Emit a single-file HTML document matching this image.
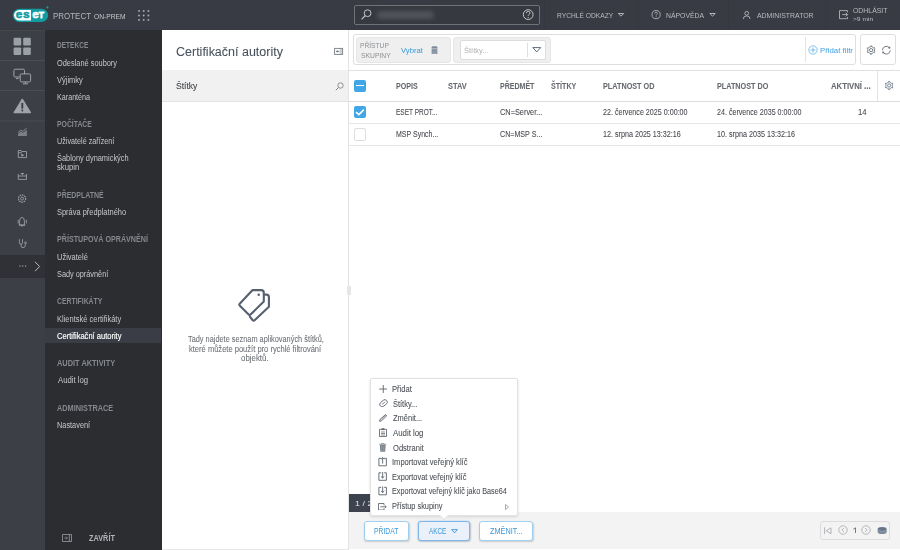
<!DOCTYPE html>
<html><head><meta charset="utf-8">
<style>
*{box-sizing:border-box;margin:0;padding:0}
html,body{width:900px;height:550px;overflow:hidden;background:#fff;font-family:"Liberation Sans",sans-serif;position:relative}
.b{position:absolute}
.t{position:absolute;white-space:nowrap;transform-origin:0 0;-webkit-text-stroke:0.07px currentColor}
</style></head><body>
<div class="b" style="left:0;top:0;width:900px;height:30px;background:#383b43"></div>
<div class="b" style="left:0;top:30px;width:45px;height:520px;background:#3c3f46"></div>
<div class="b" style="left:45px;top:30px;width:117px;height:520px;background:#2b2d31"></div>
<svg class="b" style="left:0;top:0" width="52" height="30" viewBox="0 0 52 30"><rect x="12.8" y="8.8" width="35.3" height="13.1" rx="6.5" fill="#129ca1"/><path d="M31 9.9 H19.4 A5.35 5.35 0 0 0 19.4 20.6 H31 Z" fill="#fff"/><g font-family="Liberation Sans" font-weight="bold" font-size="11.8" stroke-width="0.55"><text x="15.7" y="18.4" fill="#129ca1" stroke="#129ca1">e</text><text x="22.9" y="18.4" fill="#129ca1" stroke="#129ca1">s</text><text x="32.2" y="18.4" fill="#fff" stroke="#fff">e</text></g><path d="M38.6 11.6 H44.6 V13.5 H42.6 V18.4 H40.4 V13.5 H38.6 Z" fill="#fff"/><circle cx="47.4" cy="7.4" r="1.1" fill="#129ca1"/></svg>
<div class="t" style="left:53.16px;top:11.75px;font-size:9.0px;line-height:9.0px;color:#b4b7bc;transform:scaleX(0.884);-webkit-text-stroke:0">PROTECT</div>
<div class="t" style="left:93.90px;top:13.55px;font-size:6.4px;line-height:6.4px;color:#c6c8cc;transform:scaleX(1.047);-webkit-text-stroke:0">ON-PREM</div>
<svg class="b" style="left:0;top:0" width="160" height="30" viewBox="0 0 160 30"><g fill="#a9acb1"><circle cx="139" cy="11" r="0.95"/><circle cx="143.7" cy="11" r="0.95"/><circle cx="148.4" cy="11" r="0.95"/><circle cx="139" cy="15.45" r="0.95"/><circle cx="143.7" cy="15.45" r="0.95"/><circle cx="148.4" cy="15.45" r="0.95"/><circle cx="139" cy="19.9" r="0.95"/><circle cx="143.7" cy="19.9" r="0.95"/><circle cx="148.4" cy="19.9" r="0.95"/></g></svg>
<div class="b" style="left:354px;top:5px;width:186px;height:20px;border:1px solid #6f7278;border-radius:2px;background:#36393f"></div>
<svg class="b" style="left:0;top:0" width="900" height="30" viewBox="0 0 900 30"><g fill="none" stroke="#c4c6ca" stroke-width="1"><circle cx="367.6" cy="13.2" r="3.4"/><path d="M365.2 15.7 L361.6 19.3" stroke-width="1.2"/><circle cx="528.2" cy="14.6" r="4.9"/><path d="M526.4 13.2 Q526.4 11.3 528.2 11.3 Q530 11.3 530 13 Q530 14.1 528.8 14.6 Q528.2 14.9 528.2 15.9" stroke-width="0.95"/></g><circle cx="528.2" cy="17.6" r="0.6" fill="#c4c6ca"/><g fill="none" stroke="#b9bcc1" stroke-width="0.85"><circle cx="656.1" cy="14.6" r="4.1"/><path d="M654.8 13.6 Q654.8 12.2 656.1 12.2 Q657.4 12.2 657.4 13.4 Q657.4 14.2 656.6 14.6 Q656.1 14.9 656.1 15.6" stroke-width="0.8"/><circle cx="746.7" cy="13.3" r="1.9"/><path d="M743.3 19 Q743.3 15.9 746.7 15.9 Q750.1 15.9 750.1 19"/><path d="M847.5 12.3 V10.6 H839.5 V18.7 H847.5 V17"/><path d="M842.2 14.6 H847.6 M845.7 12.7 L847.6 14.6 L845.7 16.5"/></g><circle cx="656.1" cy="16.8" r="0.5" fill="#b9bcc1"/><path d="M618.3 13.5 H623.7 L621 16.2 Z M709.8 13.5 H715.2 L712.5 16.2 Z" fill="none" stroke="#b9bcc1" stroke-width="0.95" stroke-linejoin="round"/></svg>
<div class="b" style="left:377px;top:11px;width:57px;height:7.5px;border-radius:4px;background:#50535a;filter:blur(2px)"></div>
<div class="b" style="left:544px;top:0;width:1px;height:30px;background:#35383d"></div>
<div class="b" style="left:637.5px;top:0;width:1px;height:30px;background:#35383d"></div>
<div class="b" style="left:728px;top:0;width:1px;height:30px;background:#35383d"></div>
<div class="b" style="left:824.5px;top:0;width:1px;height:30px;background:#35383d"></div>
<div class="t" style="left:557.47px;top:11.90px;font-size:7.7px;line-height:7.7px;color:#b9bcc1;transform:scaleX(0.867);-webkit-text-stroke:0">RYCHLÉ ODKAZY</div>
<div class="t" style="left:665.85px;top:11.90px;font-size:7.7px;line-height:7.7px;color:#b9bcc1;transform:scaleX(0.892);-webkit-text-stroke:0">NÁPOVĚDA</div>
<div class="t" style="left:756.80px;top:11.85px;font-size:7.8px;line-height:7.8px;color:#b9bcc1;transform:scaleX(0.887);-webkit-text-stroke:0">ADMINISTRATOR</div>
<div class="t" style="left:852.89px;top:6.85px;font-size:7.8px;line-height:7.8px;color:#b9bcc1;transform:scaleX(0.883);-webkit-text-stroke:0">ODHLÁSIT</div>
<div class="t" style="left:852.87px;top:17.30px;font-size:5.9px;line-height:5.9px;color:#b9bcc1;transform:scaleX(1.126);-webkit-text-stroke:0">&gt;9 min</div>
<div class="b" style="left:0;top:29px;width:45px;height:1px;background:#34373c"></div>
<div class="b" style="left:0;top:30px;width:45px;height:1px;background:#45484e"></div>
<svg class="b" style="left:0;top:30px" width="45" height="230" viewBox="0 30 45 230">
<g fill="#9b9fa6"><rect x="13.6" y="37.8" width="7.6" height="7.6" rx="1.2"/><rect x="23.2" y="37.8" width="7.6" height="7.6" rx="1.2"/><rect x="13.6" y="47.4" width="7.6" height="7.6" rx="1.2"/><rect x="23.2" y="47.4" width="7.6" height="7.6" rx="1.2"/></g>
<rect x="0" y="60" width="45" height="1" fill="#4a4d54"/>
<g fill="none" stroke="#a0a3a9" stroke-width="1"><rect x="13.9" y="69.2" width="10.6" height="7.8" rx="1.2"/><path d="M16 78.6 H18.6"/><rect x="20.2" y="73.9" width="10.4" height="8" rx="1.2" fill="#3c3f46"/><path d="M25.4 82 V83.6 M22.8 83.8 H28"/></g>
<rect x="0" y="90" width="45" height="1" fill="#4a4d54"/>
<path d="M22.3 99.4 L30.4 112.6 H14.2 Z" fill="#a0a3a9" stroke="#a0a3a9" stroke-width="1.4" stroke-linejoin="round"/>
<path d="M22.3 103.6 V107.9" stroke="#3c3f46" stroke-width="1.9" stroke-linecap="round"/><circle cx="22.3" cy="110.4" r="1" fill="#3c3f46"/>
<rect x="0" y="120.5" width="45" height="1" fill="#4a4d54"/>
<path d="M18.2 132.4 L20.8 130.2 L22.8 131.4 L26.6 128.2" fill="none" stroke="#9a9da3" stroke-width="0.8"/><path d="M18 136 V133.8 L20.8 131.6 L22.8 132.8 L26.9 129.8 V136 Z" fill="#7c7f85"/>
<g fill="none" stroke="#a0a3a9" stroke-width="0.85"><path d="M18.3 150.5 H21 L21.8 151.5 H26.5 V157.6 H18.3 Z M18.3 152.8 H21.2 L21.8 151.5"/></g><path d="M21.4 153.6 L24.1 155.2 L21.4 156.8 Z" fill="#a0a3a9"/>
<g fill="none" stroke="#a0a3a9" stroke-width="0.85"><path d="M18.3 176 H26.5 V179.4 H18.3 Z M18.3 176 V174 M26.5 176 V174"/></g><path d="M20.4 173 H24.4 L22.4 175 Z" fill="#a0a3a9"/>
<g fill="none" stroke="#a0a3a9" stroke-width="0.85"><circle cx="22.1" cy="198.6" r="3.6" stroke-dasharray="1.6 0.75" stroke-width="1.05"/><circle cx="22.1" cy="198.6" r="1.5"/></g>
<g fill="none" stroke="#a0a3a9" stroke-width="0.85"><path d="M19.6 225 V221.2 Q19.6 217.4 22 217.4 Q24.4 217.4 24.4 221.2 V225 Z M18.8 225.2 H25.3 M18.2 219.8 V223.4 M26.3 219.8 V223.4"/></g><circle cx="22" cy="226.1" r="0.7" fill="#a0a3a9"/>
<g fill="none" stroke="#a0a3a9" stroke-width="0.85"><path d="M19.4 239.2 V242.6 Q19.4 244.3 21 244.3 Q22.5 244.3 22.5 242.6 V239.2 M21 244.3 V245.8 Q21 247.6 23 247.6 Q25.3 247.6 25.3 245.3 V243.8"/><circle cx="25.5" cy="242.8" r="0.9"/></g>
</svg>
<div class="b" style="left:0;top:255px;width:45px;height:22.5px;background:#2f3136"></div>
<svg class="b" style="left:18.5px;top:265.2px" width="8" height="2" viewBox="0 0 8 2"><g fill="#a3a6ac"><circle cx="1" cy="1" r="0.65"/><circle cx="3.8" cy="1" r="0.65"/><circle cx="6.6" cy="1" r="0.65"/></g></svg>
<svg class="b" style="left:34px;top:261px" width="7" height="11" viewBox="0 0 7 11"><path d="M1 0.8 L5.6 5.5 L1 10.2" fill="none" stroke="#b9bcc1" stroke-width="1"/></svg>
<div class="t" style="left:57.17px;top:40.95px;font-size:8.6px;line-height:8.6px;color:#85888d;font-weight:bold;transform:scaleX(0.761);-webkit-text-stroke:0">DETEKCE</div>
<div class="t" style="left:56.77px;top:59.00px;font-size:8.5px;line-height:8.5px;color:#c6c8cb;transform:scaleX(0.870);-webkit-text-stroke:0">Odeslané soubory</div>
<div class="t" style="left:57.06px;top:76.00px;font-size:8.5px;line-height:8.5px;color:#c6c8cb;transform:scaleX(0.879);-webkit-text-stroke:0">Výjimky</div>
<div class="t" style="left:57.03px;top:93.00px;font-size:8.5px;line-height:8.5px;color:#c6c8cb;transform:scaleX(0.843);-webkit-text-stroke:0">Karanténa</div>
<div class="t" style="left:57.15px;top:119.95px;font-size:8.6px;line-height:8.6px;color:#85888d;font-weight:bold;transform:scaleX(0.797);-webkit-text-stroke:0">POČÍTAČE</div>
<div class="t" style="left:57.06px;top:137.00px;font-size:8.5px;line-height:8.5px;color:#c6c8cb;transform:scaleX(0.848);-webkit-text-stroke:0">Uživatelé zařízení</div>
<div class="t" style="left:56.77px;top:154.00px;font-size:8.5px;line-height:8.5px;color:#c6c8cb;transform:scaleX(0.871);-webkit-text-stroke:0">Šablony dynamických</div>
<div class="t" style="left:56.91px;top:163.00px;font-size:8.5px;line-height:8.5px;color:#c6c8cb;transform:scaleX(0.902);-webkit-text-stroke:0">skupin</div>
<div class="t" style="left:57.15px;top:190.95px;font-size:8.6px;line-height:8.6px;color:#85888d;font-weight:bold;transform:scaleX(0.810);-webkit-text-stroke:0">PŘEDPLATNÉ</div>
<div class="t" style="left:56.96px;top:208.00px;font-size:8.5px;line-height:8.5px;color:#c6c8cb;transform:scaleX(0.876);-webkit-text-stroke:0">Správa předplatného</div>
<div class="t" style="left:57.14px;top:234.95px;font-size:8.6px;line-height:8.6px;color:#85888d;font-weight:bold;transform:scaleX(0.831);-webkit-text-stroke:0">PŘÍSTUPOVÁ OPRÁVNĚNÍ</div>
<div class="t" style="left:56.74px;top:253.00px;font-size:8.5px;line-height:8.5px;color:#c6c8cb;transform:scaleX(0.883);-webkit-text-stroke:0">Uživatelé</div>
<div class="t" style="left:56.97px;top:270.00px;font-size:8.5px;line-height:8.5px;color:#c6c8cb;transform:scaleX(0.861);-webkit-text-stroke:0">Sady oprávnění</div>
<div class="t" style="left:56.93px;top:296.95px;font-size:8.6px;line-height:8.6px;color:#85888d;font-weight:bold;transform:scaleX(0.798);-webkit-text-stroke:0">CERTIFIKÁTY</div>
<div class="t" style="left:56.90px;top:315.00px;font-size:8.5px;line-height:8.5px;color:#c6c8cb;transform:scaleX(0.882);-webkit-text-stroke:0">Klientské certifikáty</div>
<div class="b" style="left:45px;top:328px;width:116px;height:15.2px;background:#3a3d46"></div>
<div class="t" style="left:56.82px;top:332.00px;font-size:8.5px;line-height:8.5px;color:#ffffff;transform:scaleX(0.886);-webkit-text-stroke:0.15px #fff">Certifikační autority</div>
<div class="t" style="left:57.01px;top:358.95px;font-size:8.6px;line-height:8.6px;color:#85888d;font-weight:bold;transform:scaleX(0.861);-webkit-text-stroke:0">AUDIT AKTIVITY</div>
<div class="t" style="left:57.50px;top:376.00px;font-size:8.5px;line-height:8.5px;color:#c6c8cb;transform:scaleX(0.912);-webkit-text-stroke:0">Audit log</div>
<div class="t" style="left:57.02px;top:403.95px;font-size:8.6px;line-height:8.6px;color:#85888d;font-weight:bold;transform:scaleX(0.852);-webkit-text-stroke:0">ADMINISTRACE</div>
<div class="t" style="left:56.91px;top:421.00px;font-size:8.5px;line-height:8.5px;color:#c6c8cb;transform:scaleX(0.865);-webkit-text-stroke:0">Nastavení</div>
<svg class="b" style="left:62px;top:533.5px" width="10" height="8" viewBox="0 0 10 8"><path d="M0.5 0.5 H9.5 V7.5 H0.5 Z M7.3 0.5 V7.5" fill="none" stroke="#8e9197" stroke-width="0.9"/><path d="M2.3 4 H5.3 M4 2.6 L5.4 4 L4 5.4" fill="none" stroke="#8e9197" stroke-width="0.8"/></svg>
<div class="t" style="left:89.38px;top:534.05px;font-size:8.4px;line-height:8.4px;color:#b0b3b7;font-weight:bold;transform:scaleX(0.875);-webkit-text-stroke:0">ZAVŘÍT</div>
<div class="b" style="left:162px;top:30px;width:738px;height:520px;background:#fff"></div>
<div class="t" style="left:176.07px;top:46.10px;font-size:12.3px;line-height:12.3px;color:#48525c;transform:scaleX(1.016);">Certifikační autority</div>
<svg class="b" style="left:330px;top:44px" width="16" height="14" viewBox="330 44 16 14"><rect x="339.6" y="48.4" width="3" height="6" fill="#cfd2d6"/><rect x="334.6" y="48.4" width="8" height="6" fill="none" stroke="#7d838a" stroke-width="0.95"/><path d="M339.3 51.4 H336.6" stroke="#6d737a" stroke-width="0.9"/><path d="M335.9 51.4 L337.6 50.1 V52.7 Z" fill="#6d737a"/></svg>
<div class="b" style="left:162px;top:69.7px;width:186px;height:32px;background:#f1f1f1;border-bottom:1px solid #e3e3e3"></div>
<div class="t" style="left:176.32px;top:82.00px;font-size:8.5px;line-height:8.5px;color:#3e4146;transform:scaleX(1.006);">Štítky</div>
<svg class="b" style="left:335px;top:82px" width="9" height="9" viewBox="0 0 9 9"><circle cx="5.5" cy="3.5" r="2.7" fill="none" stroke="#80848a" stroke-width="0.9"/><path d="M3.6 5.4 L0.8 8.2" stroke="#80848a" stroke-width="1"/></svg>
<div class="b" style="left:348px;top:30px;width:1px;height:520px;background:#e3e3e3"></div>
<div class="b" style="left:346.5px;top:285.5px;width:4px;height:9.5px;background:#e6e6e6;border-radius:1px"></div>
<svg class="b" style="left:234px;top:285px" width="40" height="40" viewBox="234 285 40 40"><g fill="none" stroke="#56606e" stroke-width="2.1" stroke-linejoin="round" stroke-linecap="round"><path d="M252.6 290.1 H261.2 Q263.8 290.1 263.8 292.7 V301.5 L250.8 314.3 Q249.6 315.5 248.4 314.3 L239.9 305.8 Q238.7 304.6 239.9 303.4 Z"/><path d="M265 294.6 H266.4 Q268.9 294.6 268.9 297.1 V306.8 L254.9 320 Q253.7 321.2 252.5 320 L249.9 316.6"/></g><circle cx="258.7" cy="294.8" r="1.25" fill="#56606e"/></svg>
<div class="t" style="left:187.85px;top:335.00px;font-size:8.5px;line-height:8.5px;color:#6c7075;transform:scaleX(0.866);">Tady najdete seznam aplikovaných štítků,</div>
<div class="t" style="left:188.71px;top:345.00px;font-size:8.5px;line-height:8.5px;color:#6c7075;transform:scaleX(0.888);">které můžete použít pro rychlé filtrování</div>
<div class="t" style="left:241.38px;top:354.00px;font-size:8.5px;line-height:8.5px;color:#6c7075;transform:scaleX(0.927);">objektů.</div>
<div class="b" style="left:352.5px;top:34.3px;width:503px;height:31px;border:1px solid #dedede;border-radius:3px;background:#fff"></div>
<div class="b" style="left:355.8px;top:36.8px;width:95.2px;height:26.3px;background:#efefef;border:1px solid #e6e6e6;border-radius:3px"></div>
<div class="t" style="left:360.37px;top:41.95px;font-size:7.6px;line-height:7.6px;color:#8c8f93;transform:scaleX(0.877);-webkit-text-stroke:0">PŘÍSTUP</div>
<div class="t" style="left:360.59px;top:51.95px;font-size:7.6px;line-height:7.6px;color:#8c8f93;transform:scaleX(0.894);-webkit-text-stroke:0">SKUPINY</div>
<div class="t" style="left:401.36px;top:46.85px;font-size:7.8px;line-height:7.8px;color:#3398dc;transform:scaleX(0.980);-webkit-text-stroke:0">Vybrat</div>
<svg class="b" style="left:430.6px;top:45.7px" width="7" height="8.4" viewBox="0 0 7 8.4"><path d="M0.2 1.9 H6.8 L5.6 0.3 H1.4 Z" fill="#7f8a98"/><rect x="0.6" y="2.3" width="5.8" height="6" fill="#8a95a3"/><path d="M1.6 2.8 H5.4 M1.6 7.2 H5.4" stroke="#b7bec7" stroke-width="0.5"/></svg>
<div class="b" style="left:453.4px;top:37px;width:98px;height:26.3px;background:#efefef;border:1px solid #e6e6e6;border-radius:3px"></div>
<div class="b" style="left:459.5px;top:40.1px;width:86px;height:19.6px;background:#fff;border:1px solid #dcdcdc;border-radius:2px"></div>
<div class="t" style="left:464.06px;top:47.00px;font-size:7.5px;line-height:7.5px;color:#aeb0b3;transform:scaleX(1.003);-webkit-text-stroke:0">Štítky...</div>
<div class="b" style="left:527.2px;top:43.2px;width:1px;height:14px;background:#dedede"></div>
<svg class="b" style="left:532px;top:47px" width="9.5" height="5.5" viewBox="0 0 9.5 5.5"><path d="M0.8 0.6 H8.7 L4.75 4.9 Z" fill="none" stroke="#5d6b7a" stroke-width="1" stroke-linejoin="round"/></svg>
<div class="b" style="left:805px;top:37.3px;width:1px;height:25px;background:#e3e3e3"></div>
<svg class="b" style="left:807.5px;top:45.3px" width="10" height="10" viewBox="0 0 10 10"><circle cx="5" cy="5" r="4.15" fill="none" stroke="#4aa5e3" stroke-width="0.7"/><path d="M5 2.5 V7.5 M2.5 5 H7.5" stroke="#4aa5e3" stroke-width="0.7"/></svg>
<div class="t" style="left:819.98px;top:46.90px;font-size:7.7px;line-height:7.7px;color:#3d9de0;transform:scaleX(1.013);-webkit-text-stroke:0">Přidat filtr</div>
<div class="b" style="left:860px;top:34.3px;width:36px;height:31px;border:1px solid #dedede;border-radius:3px;background:#fff"></div>
<svg class="b" style="left:860px;top:42px" width="36" height="16" viewBox="860 42 36 16"><path d="M869.45 47.24 L870.41 46.87 L870.59 45.93 L871.61 45.93 L871.79 46.87 L872.75 47.24 L873.55 47.89 L874.45 47.57 L874.97 48.46 L874.24 49.08 L874.40 50.10 L874.24 51.12 L874.97 51.74 L874.45 52.63 L873.55 52.31 L872.75 52.96 L871.79 53.33 L871.61 54.27 L870.59 54.27 L870.41 53.33 L869.45 52.96 L868.65 52.31 L867.75 52.63 L867.23 51.74 L867.96 51.12 L867.80 50.10 L867.96 49.08 L867.23 48.46 L867.75 47.57 L868.65 47.89 Z" fill="none" stroke="#6f757c" stroke-width="0.95" stroke-linejoin="round"/><circle cx="871.1" cy="50.1" r="1.6" fill="none" stroke="#6f757c" stroke-width="0.9"/><path d="M889.39 47.69 A3.9 3.9 0 0 0 882.50 50.34 M883.21 52.44 A3.9 3.9 0 0 0 890.29 50.40" fill="none" stroke="#6f757c" stroke-width="0.95"/><rect x="888.49" y="46.79" width="1.8" height="1.8" fill="#6f757c"/><rect x="882.31" y="51.54" width="1.8" height="1.8" fill="#6f757c"/></svg>
<div class="b" style="left:349px;top:70.2px;width:551px;height:1px;background:#e0e0e0"></div>
<div class="b" style="left:349px;top:100.8px;width:551px;height:1px;background:#dcdcdc"></div>
<div class="b" style="left:349px;top:123px;width:551px;height:1px;background:#e6e6e6"></div>
<div class="b" style="left:349px;top:145px;width:551px;height:1px;background:#e6e6e6"></div>
<div class="b" style="left:877px;top:71px;width:1px;height:30px;background:#e3e3e3"></div>
<div class="b" style="left:354px;top:79.5px;width:12px;height:12.3px;border-radius:2px;background:#40a6e5"></div>
<div class="b" style="left:356px;top:84.9px;width:8px;height:1.6px;background:#fff"></div>
<div class="t" style="left:396.44px;top:81.95px;font-size:8.6px;line-height:8.6px;color:#66696e;font-weight:bold;transform:scaleX(0.822);">POPIS</div>
<div class="t" style="left:447.78px;top:81.95px;font-size:8.6px;line-height:8.6px;color:#66696e;font-weight:bold;transform:scaleX(0.863);">STAV</div>
<div class="t" style="left:499.84px;top:81.95px;font-size:8.6px;line-height:8.6px;color:#66696e;font-weight:bold;transform:scaleX(0.819);">PŘEDMĚT</div>
<div class="t" style="left:551.09px;top:81.95px;font-size:8.6px;line-height:8.6px;color:#66696e;font-weight:bold;transform:scaleX(0.828);">ŠTÍTKY</div>
<div class="t" style="left:602.83px;top:81.95px;font-size:8.6px;line-height:8.6px;color:#66696e;font-weight:bold;transform:scaleX(0.844);">PLATNOST OD</div>
<div class="t" style="left:716.83px;top:81.95px;font-size:8.6px;line-height:8.6px;color:#66696e;font-weight:bold;transform:scaleX(0.841);">PLATNOST DO</div>
<div class="t" style="left:830.91px;top:81.95px;font-size:8.6px;line-height:8.6px;color:#66696e;font-weight:bold;transform:scaleX(0.901);">AKTIVNÍ ...</div>
<svg class="b" style="left:880px;top:76px" width="18" height="18" viewBox="880 76 18 18"><path d="M887.50 82.73 L888.43 82.37 L888.60 81.43 L889.60 81.43 L889.77 82.37 L890.70 82.73 L891.48 83.36 L892.37 83.03 L892.87 83.90 L892.14 84.51 L892.30 85.50 L892.14 86.49 L892.87 87.10 L892.37 87.97 L891.48 87.64 L890.70 88.27 L889.77 88.63 L889.60 89.57 L888.60 89.57 L888.43 88.63 L887.50 88.27 L886.72 87.64 L885.83 87.97 L885.33 87.10 L886.06 86.49 L885.90 85.50 L886.06 84.51 L885.33 83.90 L885.83 83.03 L886.72 83.36 Z" fill="none" stroke="#6c7a8c" stroke-width="0.95" stroke-linejoin="round"/><circle cx="889.1" cy="85.5" r="1.55" fill="none" stroke="#6c7a8c" stroke-width="0.9"/></svg>
<div class="b" style="left:354px;top:105.6px;width:12px;height:12.4px;border-radius:2px;background:#40a6e5"></div>
<svg class="b" style="left:354px;top:105.6px" width="12" height="12" viewBox="0 0 12 12"><path d="M2 6.1 L4.9 8.6 L9.9 3.6" fill="none" stroke="#fff" stroke-width="1.6"/></svg>
<div class="b" style="left:354px;top:128.2px;width:12px;height:12.5px;border-radius:2px;background:#fff;border:1px solid #dedede"></div>
<div class="t" style="left:396.38px;top:108.00px;font-size:8.5px;line-height:8.5px;color:#45484d;transform:scaleX(0.766);">ESET PROT...</div>
<div class="t" style="left:499.63px;top:108.00px;font-size:8.5px;line-height:8.5px;color:#45484d;transform:scaleX(0.867);">CN=Server...</div>
<div class="t" style="left:602.94px;top:108.00px;font-size:8.5px;line-height:8.5px;color:#45484d;transform:scaleX(0.840);">22. července 2025 0:00:00</div>
<div class="t" style="left:716.94px;top:108.00px;font-size:8.5px;line-height:8.5px;color:#45484d;transform:scaleX(0.838);">24. července 2035 0:00:00</div>
<div class="t" style="left:858.43px;top:108.00px;font-size:8.5px;line-height:8.5px;color:#45484d;transform:scaleX(0.897);">14</div>
<div class="t" style="left:396.34px;top:130.00px;font-size:8.5px;line-height:8.5px;color:#45484d;transform:scaleX(0.824);">MSP Synch...</div>
<div class="t" style="left:499.64px;top:130.00px;font-size:8.5px;line-height:8.5px;color:#45484d;transform:scaleX(0.837);">CN=MSP S...</div>
<div class="t" style="left:603.36px;top:130.00px;font-size:8.5px;line-height:8.5px;color:#45484d;transform:scaleX(0.844);">12. srpna 2025 13:32:16</div>
<div class="t" style="left:716.76px;top:130.00px;font-size:8.5px;line-height:8.5px;color:#45484d;transform:scaleX(0.845);">10. srpna 2035 13:32:16</div>
<div class="b" style="left:349px;top:512px;width:551px;height:37px;background:#f3f3f3"></div>
<div class="b" style="left:349px;top:494.2px;width:30px;height:18.3px;background:#3c434e"></div>
<div class="b" style="left:162px;top:549px;width:186px;height:1px;background:#e8e8e8"></div>
<div class="t" style="left:355.03px;top:499.85px;font-size:7.8px;line-height:7.8px;color:#e2e4e6;transform:scaleX(1.148);-webkit-text-stroke:0">1 / 2</div>
<div class="b" style="left:363.9px;top:520.9px;width:45.10000000000002px;height:20.4px;border:1px solid #9fd0f1;border-radius:3px;background:#fff;box-shadow:0.5px 1px 1.5px rgba(0,0,0,0.16)"></div>
<div class="b" style="left:417.9px;top:520.9px;width:52.200000000000045px;height:20.4px;border:1px solid #7fb6e6;border-radius:3px;background:#eaf1fb;box-shadow:0 0 2px rgba(60,140,220,0.45),0.5px 1px 1.5px rgba(0,0,0,0.14)"></div>
<div class="b" style="left:479.2px;top:520.9px;width:53.80000000000001px;height:20.4px;border:1px solid #9fd0f1;border-radius:3px;background:#fff;box-shadow:0.5px 1px 1.5px rgba(0,0,0,0.16)"></div>
<div class="t" style="left:374.06px;top:527.05px;font-size:8.4px;line-height:8.4px;color:#3a96d6;transform:scaleX(0.808);-webkit-text-stroke:0">PŘIDAT</div>
<div class="t" style="left:429.00px;top:527.05px;font-size:8.4px;line-height:8.4px;color:#3a96d6;transform:scaleX(0.760);-webkit-text-stroke:0">AKCE</div>
<svg class="b" style="left:451px;top:528.5px" width="7" height="4.5" viewBox="0 0 7 4.5"><path d="M0.6 0.6 H6.4 L3.5 3.9 Z" fill="none" stroke="#3a96d6" stroke-width="0.9" stroke-linejoin="round"/></svg>
<div class="t" style="left:489.68px;top:527.05px;font-size:8.4px;line-height:8.4px;color:#3a96d6;transform:scaleX(0.875);-webkit-text-stroke:0">ZMĚNIT...</div>
<div class="b" style="left:820px;top:521px;width:70px;height:19px;border:1px solid #dcdcdc;border-radius:3px;background:#f3f3f3"></div>
<svg class="b" style="left:824px;top:526.5px" width="7.5" height="7.5" viewBox="0 0 7.5 7.5"><path d="M0.6 0.3 V7.2 M7 0.8 L2.2 3.75 L7 6.7 Z" fill="none" stroke="#a9acb0" stroke-width="0.9" stroke-linejoin="round"/></svg>
<svg class="b" style="left:837.6px;top:525.3px" width="10" height="10" viewBox="0 0 10 10"><circle cx="5" cy="5" r="4.2" fill="none" stroke="#a9acb0" stroke-width="0.85"/><path d="M5.8 3 L3.9 5 L5.8 7" fill="none" stroke="#a9acb0" stroke-width="0.85"/></svg>
<svg class="b" style="left:850px;top:525px" width="10" height="10" viewBox="850 525 10 10"><path d="M853.4 529.1 L855.5 527.8 V533" fill="none" stroke="#6f7479" stroke-width="0.95"/></svg>
<svg class="b" style="left:861.3px;top:525.3px" width="10" height="10" viewBox="0 0 10 10"><circle cx="5" cy="5" r="4.2" fill="none" stroke="#a9acb0" stroke-width="0.85"/><path d="M4.2 3 L6.1 5 L4.2 7" fill="none" stroke="#a9acb0" stroke-width="0.85"/></svg>
<svg class="b" style="left:876px;top:525px" width="12" height="11" viewBox="876 525 12 11"><path d="M877.7 529.2 Q877.7 527 882.15 527 Q886.6 527 886.6 529.2 V532 Q886.6 534.1 882.15 534.1 Q877.7 534.1 877.7 532 Z" fill="#66758a"/><path d="M877.9 530 Q878.5 531.3 882.15 531.3 Q885.8 531.3 886.4 530 M877.9 532 Q878.5 533.1 882.15 533.1 Q885.8 533.1 886.4 532" fill="none" stroke="#c9d0d8" stroke-width="0.5"/></svg>
<div class="b" style="left:369.8px;top:378px;width:147.8px;height:137.5px;background:#fff;border:1px solid #e2e2e2;border-radius:2px;box-shadow:0 1px 3px rgba(0,0,0,0.13)"></div>
<div class="b" style="left:441px;top:512.5px;width:6px;height:6px;background:#fff;transform:rotate(45deg);border-right:1px solid #e2e2e2;border-bottom:1px solid #e2e2e2"></div>
<div class="t" style="left:392.39px;top:385.65px;font-size:8.2px;line-height:8.2px;color:#4b4f55;transform:scaleX(0.927);">Přidat</div>
<div class="t" style="left:392.66px;top:400.65px;font-size:8.2px;line-height:8.2px;color:#4b4f55;transform:scaleX(0.909);">Štítky...</div>
<div class="t" style="left:392.77px;top:414.65px;font-size:8.2px;line-height:8.2px;color:#4b4f55;transform:scaleX(0.915);">Změnit...</div>
<div class="t" style="left:393.00px;top:429.65px;font-size:8.2px;line-height:8.2px;color:#4b4f55;transform:scaleX(0.955);">Audit log</div>
<div class="t" style="left:392.66px;top:444.65px;font-size:8.2px;line-height:8.2px;color:#4b4f55;transform:scaleX(0.923);">Odstranit</div>
<div class="t" style="left:392.32px;top:458.65px;font-size:8.2px;line-height:8.2px;color:#4b4f55;transform:scaleX(0.921);">Importovat veřejný klíč</div>
<div class="t" style="left:392.41px;top:473.65px;font-size:8.2px;line-height:8.2px;color:#4b4f55;transform:scaleX(0.903);">Exportovat veřejný klíč</div>
<div class="t" style="left:392.42px;top:487.65px;font-size:8.2px;line-height:8.2px;color:#4b4f55;transform:scaleX(0.885);">Exportovat veřejný klíč jako Base64</div>
<div class="t" style="left:392.41px;top:502.65px;font-size:8.2px;line-height:8.2px;color:#4b4f55;transform:scaleX(0.903);">Přístup skupiny</div>
<svg class="b" style="left:378.5px;top:385px" width="8.5" height="8" viewBox="0 0 8.5 8"><path d="M4.25 0 V8 M0.2 4 H8.3" stroke="#5b636c" stroke-width="0.9"/></svg>
<svg class="b" style="left:378.5px;top:398.8px" width="9" height="8.5" viewBox="0 0 9 8.5"><g transform="rotate(-40 4.5 4.25)"><rect x="0.4" y="1.9" width="8.2" height="4.7" rx="2.2" fill="none" stroke="#5b636c" stroke-width="0.85"/><path d="M2.6 4.25 H6.4" stroke="#5b636c" stroke-width="0.7"/></g></svg>
<svg class="b" style="left:378.6px;top:414.3px" width="8.3" height="7.8" viewBox="0 0 8.3 7.8"><path d="M6.6 0.5 L7.8 1.7 L2.6 6.7 L0.5 7.3 L1.1 5.3 Z" fill="none" stroke="#5b636c" stroke-width="0.9" stroke-linejoin="round"/><path d="M1.6 5.8 L6.9 1.2" stroke="#5b636c" stroke-width="0.6"/></svg>
<svg class="b" style="left:379px;top:428.3px" width="8" height="9" viewBox="0 0 8 9"><path d="M0.5 1.3 H7.5 V8.5 H0.5 Z" fill="none" stroke="#5b636c" stroke-width="0.85"/><path d="M2.6 0.3 H5.4 V2.1 H2.6 Z" fill="#5b636c"/><path d="M2 4 H6 M2 5.5 H6 M2 7 H6" stroke="#5b636c" stroke-width="0.7"/></svg>
<svg class="b" style="left:379px;top:443px" width="7.5" height="9" viewBox="0 0 7.5 9"><path d="M0.2 1.3 H7.3 M2.5 1.1 V0.3 H5 V1.1" fill="none" stroke="#7f868e" stroke-width="0.8"/><path d="M0.8 2 H6.7 L6.2 8.8 H1.3 Z" fill="#7f868e"/><path d="M2.7 3.2 V7.8 M4.8 3.2 V7.8" stroke="#aab0b6" stroke-width="0.5"/></svg>
<svg class="b" style="left:374px;top:454px" width="18" height="44" viewBox="374 454 18 44"><path d="M381.2 458.3 H378.9 V465.8 H386.4 V458.3 H384.1" fill="none" stroke="#5b636c" stroke-width="0.9"/><path d="M382.65 463.6 V457.6 M381 459.2 L382.65 457.6 L384.3 459.2" fill="none" stroke="#5b636c" stroke-width="0.9"/><path d="M381.2 472.8 H378.9 V480.3 H386.4 V472.8 H384.1" fill="none" stroke="#5b636c" stroke-width="0.9"/><path d="M382.65 472 V478 M381 476.4 L382.65 478 L384.3 476.4" fill="none" stroke="#5b636c" stroke-width="0.9"/><path d="M381.2 487.3 H378.9 V494.8 H386.4 V487.3 H384.1" fill="none" stroke="#5b636c" stroke-width="0.9"/><path d="M382.65 486.5 V492.5 M381 490.9 L382.65 492.5 L384.3 490.9" fill="none" stroke="#5b636c" stroke-width="0.9"/></svg>
<svg class="b" style="left:378.4px;top:502.5px" width="8.5" height="7.5" viewBox="0 0 8.5 7.5"><path d="M6 2.2 V0.5 H0.5 V7 H6 V5.3" fill="none" stroke="#5b636c" stroke-width="0.85"/><path d="M2.3 3.75 H8.2 M6.8 2.4 L8.2 3.75 L6.8 5.1" fill="none" stroke="#5b636c" stroke-width="0.85"/></svg>
<svg class="b" style="left:504.5px;top:503.5px" width="4" height="6" viewBox="0 0 4 6"><path d="M0.5 0.5 L3.5 3 L0.5 5.5 Z" fill="none" stroke="#8a8e93" stroke-width="0.75" stroke-linejoin="round"/></svg>
</body></html>
